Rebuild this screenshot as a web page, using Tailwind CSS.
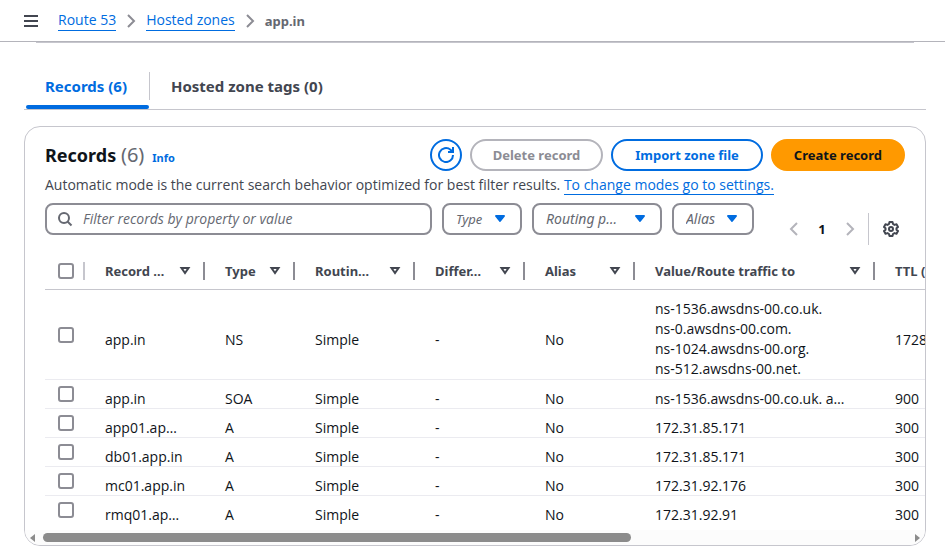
<!DOCTYPE html>
<html lang="en">
<head>
<meta charset="utf-8">
<meta name="viewport" content="width=device-width, initial-scale=1">
<title>Route 53 – app.in</title>
<script src="https://cdn.jsdelivr.net/npm/@tailwindcss/browser@4"></script>
</head>
<body class="bg-white text-[14px] leading-5 text-[#0f141a] font-['Open_Sans','Noto_Sans',sans-serif]">
<svg class="hidden">
  <symbol id="sort" viewBox="0 0 16 16"><path d="M4.500 5h7L8 10z" fill="none" stroke="currentColor" stroke-width="2"/></symbol>
  <symbol id="caret" viewBox="0 0 16 16"><path d="M4 5h8l-4 5z" fill="currentColor" stroke="currentColor" stroke-width="2" stroke-linejoin="round"/></symbol>
  <symbol id="chevron" viewBox="0 0 16 16"><path d="M5 2l6 6-6 6" fill="none" stroke="currentColor" stroke-width="2"/></symbol>
</svg>

<header class="flex h-[42px] items-center border-b border-[#b4b4bb] px-6">
  <button aria-label="Open navigation" class="mr-5 text-[#424650]">
    <svg class="block w-[14px] h-[14px]" viewBox="0 0 14 14"><path d="M0 2h14M0 7h14M0 12h14" stroke="currentColor" stroke-width="2"/></svg>
  </button>
  <nav aria-label="Breadcrumbs" class="flex items-center gap-[7px]">
    <a href="#" class="border-b border-[#006ce0] text-[#006ce0]">Route 53</a>
    <svg class="w-4 h-4 text-[#8c8c94]"><use href="#chevron"/></svg>
    <a href="#" class="border-b border-[#006ce0] text-[#006ce0]">Hosted zones</a>
    <svg class="w-4 h-4 text-[#8c8c94]"><use href="#chevron"/></svg>
    <span class="font-['Noto_Sans'] text-[13px] font-bold text-[#656871]">app.in</span>
  </nav>
</header>

<main class="pl-6 pr-[19px]">
  <div class="mx-3 h-px bg-[#c6c6cd]"></div>

  <div role="tablist" class="mt-5 flex h-[47px] border-b border-[#c6c6cd] font-['Noto_Sans'] text-[15px] font-bold">
    <button role="tab" aria-selected="true" class="ml-0.5 flex flex-col text-[#006ce0]">
      <span class="flex h-[42px] items-center pt-[3px] pl-[19px] pr-[22px]">Records (6)</span>
      <span class="h-1 w-full rounded-sm bg-[#006ce0]"></span>
    </button>
    <button role="tab" aria-selected="false" class="mt-[9px] h-7 border-l border-[#c6c6cd] px-[21px] text-[#424650]">Hosted zone tags (0)</button>
  </div>

  <section class="mt-4 overflow-hidden rounded-2xl border border-[#c6c6cd]">
    <div class="px-5 pt-3">
      <div class="flex items-center justify-between">
        <div class="flex items-baseline gap-2 font-['Noto_Sans']">
          <h2 class="text-[18px] leading-6 font-bold">Records <span class="text-[20px] font-normal text-[#656871]">(6)</span></h2>
          <a href="#" class="text-[11px] font-bold text-[#006ce0]">Info</a>
        </div>
        <div class="flex gap-2 font-['Noto_Sans'] text-[13px] font-bold">
          <button aria-label="Refresh" class="flex h-8 w-8 items-center justify-center rounded-full border-2 border-[#006ce0] text-[#006ce0]">
            <svg class="w-4 h-4" viewBox="0 0 16 16" fill="none" stroke="currentColor" stroke-width="2"><path d="M15 8a7 7 0 1 1-2.500-5.300L15 5"/><path d="M15 0v5h-5"/></svg>
          </button>
          <button disabled class="h-8 rounded-full border-2 border-[#b4b4bb] px-[21px] text-[#8c8c94]">Delete record</button>
          <button class="h-8 rounded-full border-2 border-[#006ce0] px-[22px] text-[#006ce0]">Import zone file</button>
          <button class="h-8 rounded-full border-2 border-[#ff9900] bg-[#ff9900] px-[21px]">Create record</button>
        </div>
      </div>
      <p class="mt-1 text-[#424650]">Automatic mode is the current search behavior optimized for best filter results. <a href="#" class="border-b border-[#006ce0] text-[#006ce0]">To change modes go to settings.</a></p>

      <div class="mt-2 flex items-start gap-9">
        <div class="flex flex-1 gap-[10px] font-['Noto_Sans'] text-[13px] italic text-[#656871]">
          <label class="flex h-8 flex-1 items-center rounded-lg border-2 border-[#8c8c94] pl-[10px]">
            <svg class="mr-[10px] w-4 h-4 shrink-0" viewBox="0 0 16 16" fill="none" stroke="currentColor" stroke-width="2"><circle cx="7" cy="7" r="5"/><path d="M10.500 10.500l4 4"/></svg>
            <input type="search" aria-label="Filter records" placeholder="Filter records by property or value" class="w-full text-[14px] font-['Open_Sans'] outline-none placeholder:text-[#656871]">
          </label>
          <div class="grid h-8 w-20 items-center">
            <select aria-label="Type" class="[grid-area:1/1] h-8 appearance-none rounded-lg border-2 border-[#8c8c94] pl-3 italic"><option>Type</option></select>
            <svg class="[grid-area:1/1] pointer-events-none mr-[14px] w-4 h-4 justify-self-end text-[#006ce0]"><use href="#caret"/></svg>
          </div>
          <div class="grid h-8 w-[130px] items-center">
            <select aria-label="Routing policy" class="[grid-area:1/1] h-8 appearance-none rounded-lg border-2 border-[#8c8c94] pl-3 text-[14px] italic"><option>Routing p…</option></select>
            <svg class="[grid-area:1/1] pointer-events-none mr-[14px] w-4 h-4 justify-self-end text-[#006ce0]"><use href="#caret"/></svg>
          </div>
          <div class="grid h-8 w-[82px] items-center">
            <select aria-label="Alias" class="[grid-area:1/1] h-8 appearance-none rounded-lg border-2 border-[#8c8c94] pl-3 text-[14px] italic"><option>Alias</option></select>
            <svg class="[grid-area:1/1] pointer-events-none mr-[14px] w-4 h-4 justify-self-end text-[#006ce0]"><use href="#caret"/></svg>
          </div>
        </div>
        <div class="mt-[10px] flex h-8 items-center">
          <button aria-label="Previous page" disabled class="-ml-1 text-[#b4b4bb]"><svg class="block w-4 h-4 rotate-180"><use href="#chevron"/></svg></button>
          <button aria-label="Page 1" class="w-10 font-['Noto_Sans'] text-[13px] font-bold">1</button>
          <button aria-label="Next page" disabled class="text-[#b4b4bb]"><svg class="block w-4 h-4"><use href="#chevron"/></svg></button>
          <span class="ml-[10px] h-8 w-px bg-[#c6c6cd]"></span>
          <button aria-label="Preferences" class="ml-[14px] mr-[6px] text-[#424650]">
            <svg class="block w-4 h-4" viewBox="0 0 16 16" fill="none" stroke="currentColor" stroke-width="2" stroke-linejoin="round"><path d="M6.500 1h3l.5 2 1.500.9 2-.6 1.500 2.600-1.500 1.400v1.400l1.500 1.400-1.500 2.600-2-.6-1.500.9-.5 2h-3L6 13l-1.500-.9-2 .6L1 10.100l1.500-1.400V7.300L1 5.900l1.500-2.600 2 .6L6 3z"/><circle cx="8" cy="8" r="2"/></svg>
          </button>
        </div>
      </div>
    </div>

    <div class="ml-5 overflow-hidden">
      <table class="mt-[7px] w-[960px] table-fixed border-separate border-spacing-0 text-left">
        <colgroup><col class="w-10"><col class="w-[120px]"><col class="w-[90px]"><col class="w-[120px]"><col class="w-[110px]"><col class="w-[110px]"><col class="w-[240px]"><col></colgroup>
        <thead class="font-['Noto_Sans'] text-[13px] text-[#424650] [&_th]:h-[38px] [&_th]:border-b [&_th]:border-[#c6c6cd] [&_th]:p-0 [&_div]:flex [&_div]:h-[18px] [&_div]:items-center [&_div]:justify-between [&_div]:border-r-2 [&_div]:border-[#8c8c94] [&_div]:pl-5 [&_div]:pr-[10px]">
          <tr>
            <th><span class="flex h-[18px] items-center border-r-2 border-[#c6c6cd] pl-[13px]"><input type="checkbox" aria-label="Select all records" class="h-4 w-4 appearance-none rounded-[3px] border-2 border-[#8c8c94]"></span></th>
            <th><div>Record …<svg class="w-4 h-4"><use href="#sort"/></svg></div></th>
            <th><div>Type<svg class="w-4 h-4"><use href="#sort"/></svg></div></th>
            <th><div>Routin…<svg class="w-4 h-4"><use href="#sort"/></svg></div></th>
            <th><div>Differ…<svg class="w-4 h-4"><use href="#sort"/></svg></div></th>
            <th><div>Alias<svg class="w-4 h-4"><use href="#sort"/></svg></div></th>
            <th><div>Value/Route traffic to<svg class="w-4 h-4"><use href="#sort"/></svg></div></th>
            <th><div>TTL (s…</div></th>
          </tr>
        </thead>
        <tbody class="whitespace-nowrap leading-[18px] [&_td]:border-b [&_td]:border-[#ebebf0] [&_td]:pb-0 [&_td]:pl-5 [&_td]:pt-[10px] [&_td:first-child]:pl-[13px] [&_td:first-child]:pt-0 [&_input]:block [&_input]:h-4 [&_input]:w-4 [&_input]:appearance-none [&_input]:rounded-[3px] [&_input]:border-2 [&_input]:border-[#8c8c94]">
          <tr class="h-[90px]"><td><input type="checkbox" aria-label="Select app.in NS"></td><td>app.in</td><td>NS</td><td>Simple</td><td>-</td><td>No</td><td class="pt-[9px]! leading-5">ns-1536.awsdns-00.co.uk.<br>ns-0.awsdns-00.com.<br>ns-1024.awsdns-00.org.<br>ns-512.awsdns-00.net.</td><td>172800</td></tr>
          <tr class="h-[29px]"><td><input type="checkbox" aria-label="Select app.in SOA"></td><td>app.in</td><td>SOA</td><td>Simple</td><td>-</td><td>No</td><td>ns-1536.awsdns-00.co.uk. a…</td><td>900</td></tr>
          <tr class="h-[29px]"><td><input type="checkbox" aria-label="Select app01"></td><td>app01.ap…</td><td>A</td><td>Simple</td><td>-</td><td>No</td><td>172.31.85.171</td><td>300</td></tr>
          <tr class="h-[29px]"><td><input type="checkbox" aria-label="Select db01"></td><td>db01.app.in</td><td>A</td><td>Simple</td><td>-</td><td>No</td><td>172.31.85.171</td><td>300</td></tr>
          <tr class="h-[29px]"><td><input type="checkbox" aria-label="Select mc01"></td><td>mc01.app.in</td><td>A</td><td>Simple</td><td>-</td><td>No</td><td>172.31.92.176</td><td>300</td></tr>
          <tr class="h-[29px] [&>td]:border-transparent"><td><input type="checkbox" aria-label="Select rmq01"></td><td>rmq01.ap…</td><td>A</td><td>Simple</td><td>-</td><td>No</td><td>172.31.92.91</td><td>300</td></tr>
        </tbody>
      </table>
    </div>
    <div class="mt-[5px] flex h-[15px] items-center gap-2 bg-[#fcfcfc] px-[5px] text-[#8b8b8b]">
      <svg class="h-2 w-[5px]" viewBox="0 0 5 8"><path d="M5 0v8L0 4z" fill="currentColor"/></svg>
      <div class="flex-1"><div class="h-[9px] w-[68%] rounded-full bg-[#8b8b8b]"></div></div>
      <svg class="h-2 w-[5px]" viewBox="0 0 5 8"><path d="M0 0v8l5-4z" fill="currentColor"/></svg>
    </div>
  </section>
</main>
</body>
</html>
